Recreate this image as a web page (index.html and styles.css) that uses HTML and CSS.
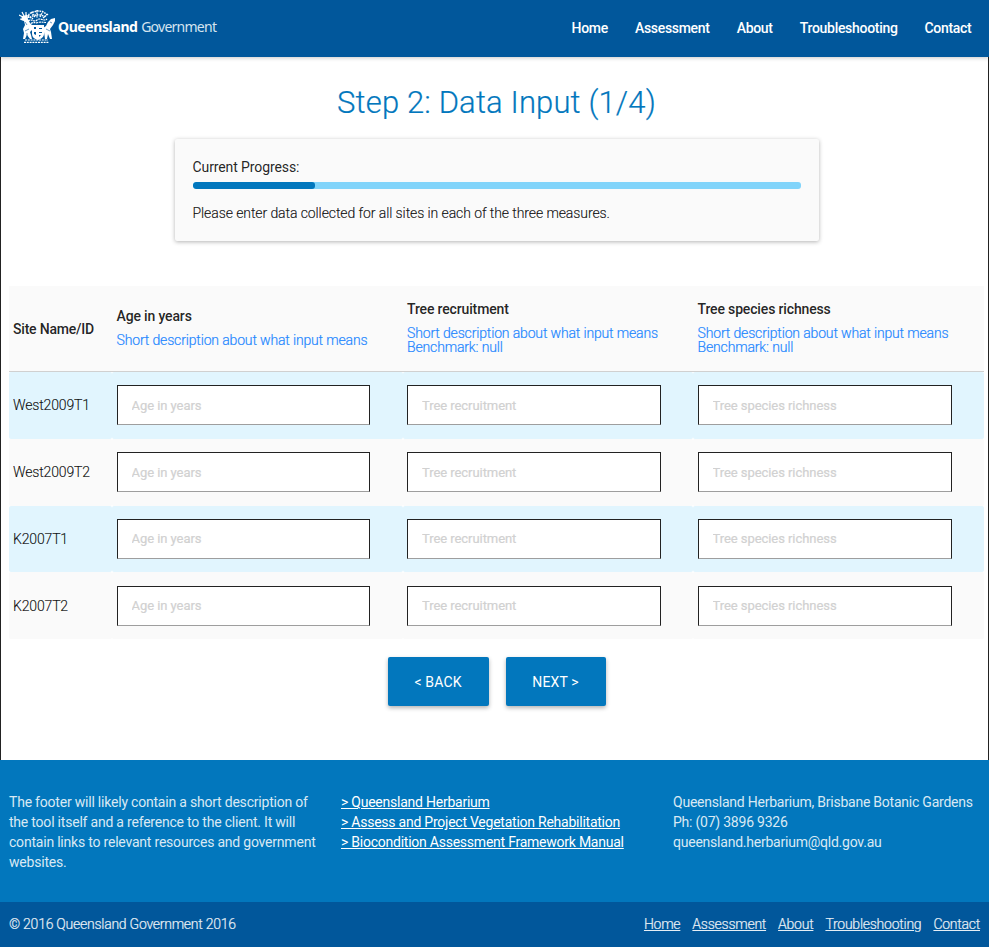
FILE: index.html
```html
<!DOCTYPE html>
<html lang="en">
<head>
<meta charset="utf-8">
<title>Step 2: Data Input</title>
<link rel="stylesheet" href="styles.css">
</head>
<body>
<header class="topbar">
  <a class="brand">
    <svg class="crest" viewBox="0 0 37 34" width="37" height="34" aria-hidden="true">
      <g fill="none" stroke="#fff" stroke-linecap="butt">
        <path stroke-width="1.4" stroke-dasharray="1.7 .8" d="M9 8c0-4 3-6 6-6 4-2 10-1 13 3M9 5l5 4M29 4l-5 4M12 2l4 5M24 1l-3 6M18 0v8M11 8c4-4 11-4 15-1M7 5l4 3"/>
        <path stroke-width="1.2" stroke-dasharray="2 .7" d="M9 11c4-3 6 2 9-1s7 2 10-1M12 13.500c3-2 4 0 7-1s5 0 8 0"/>
        <path stroke-width="1.2" d="M0 5l4 2M3 2l2 4M7 2L7 7M1 9l4 1"/>
        <path stroke-width="1.2" stroke-dasharray="2 .8" d="M5 32.400h25M6 30h23"/>
      </g>
      <g fill="#fff">
        <path d="M3 6l5-1 1 4 2 4 3 3-1 4-2 2 1 3 1 4h-2l-3-4-2 4H4l1-6-1-4 2-4-1-4-3-1z"/>
        <path d="M36 8l-4 1-3 3-2 4-3 2 1 4 1 7h2l1-5 2 5h2l-1-7-1-3 3-4 2-4z"/>
        <path fill-rule="evenodd" d="M13 15h12v9c0 3-3 5-6 6-4-1-6-3-6-6zM15 17v2h2v-2zM20 18v1h3v-1zM15 22v2l2 1v-3zM20 22v1h3v-1zM20 25v2l2-2z"/>
      </g>
      <g fill="none" stroke="#01579b" stroke-width=".6">
        <path d="M6 12l2 3M6 21l4-2M27 19l4 2M31 12l2 1M8 23v4"/>
      </g>
    </svg>
    <span class="wordmark"><b>Queensland</b> <span>Government</span></span>
  </a>
  <nav class="nav"><a>Home</a><a>Assessment</a><a>About</a><a>Troubleshooting</a><a>Contact</a></nav>
</header>

<main class="page">
  <h1>Step 2: Data Input (1/4)</h1>
  <section class="card">
    <div class="card-label">Current Progress:</div>
    <div class="progress"><div class="bar"></div></div>
    <p>Please enter data collected for all sites in each of the three measures.</p>
  </section>

  <table class="sites">
    <colgroup><col class="c-site"><col class="c-age"><col class="c-age"><col></colgroup>
    <thead>
      <tr>
        <th>Site Name/ID</th>
        <th>Age in years<div class="desc">Short description about what input means</div></th>
        <th>Tree recruitment<div class="desc">Short description about what input means<br>Benchmark: null</div></th>
        <th>Tree species richness<div class="desc">Short description about what input means<br>Benchmark: null</div></th>
      </tr>
    </thead>
    <tbody>
      <tr><td>West2009T1</td><td><input placeholder="Age in years"></td><td><input placeholder="Tree recruitment"></td><td><input placeholder="Tree species richness"></td></tr>
      <tr><td>West2009T2</td><td><input placeholder="Age in years"></td><td><input placeholder="Tree recruitment"></td><td><input placeholder="Tree species richness"></td></tr>
      <tr><td>K2007T1</td><td><input placeholder="Age in years"></td><td><input placeholder="Tree recruitment"></td><td><input placeholder="Tree species richness"></td></tr>
      <tr><td>K2007T2</td><td><input placeholder="Age in years"></td><td><input placeholder="Tree recruitment"></td><td><input placeholder="Tree species richness"></td></tr>
    </tbody>
  </table>

  <div class="actions"><button class="back">&lt; BACK</button><button>NEXT &gt;</button></div>
</main>

<footer class="footer">
  <div class="footer-main">
    <div class="about">The footer will likely contain a short description of<br>the tool itself and a reference to the client. It will<br>contain links to relevant resources and government<br>websites.</div>
    <div class="links"><a>&gt; Queensland Herbarium</a><a>&gt; Assess and Project Vegetation Rehabilitation</a><a>&gt; Biocondition Assessment Framework Manual</a></div>
    <div>Queensland Herbarium, Brisbane Botanic Gardens<br>Ph: (07) 3896 9326<br>queensland.herbarium@qld.gov.au</div>
  </div>
  <div class="footer-bar">
    <span>© 2016 Queensland Government 2016</span>
    <nav><a>Home</a><a>Assessment</a><a>About</a><a>Troubleshooting</a><a>Contact</a></nav>
  </div>
</footer>
</body>
</html>
```
FILE: styles.css
```css
* { box-sizing: border-box; }
body {
  margin: 0;
  height: 947px;
  display: flex;
  flex-direction: column;
  overflow: hidden;
  font: 300 14px/20px Roboto, sans-serif;
  color: rgba(0, 0, 0, .87);
  background: #fff;
}
h1, .card p, td, .desc, .footer-bar { -webkit-text-stroke: .2px currentColor; }
.topbar {
  position: relative;
  flex: none;
  height: 57px;
  padding: 0 17.500px 2px 19px;
  display: flex;
  justify-content: space-between;
  align-items: center;
  background: #01579b;
  color: #fff;
  box-shadow: 0 1px 4px rgba(0, 0, 0, .22);
}
.brand { display: flex; align-items: center; height: 53px; margin-top: -1px; }
.crest { display: block; }
.wordmark {
  margin-left: 2px;
  font: 400 14px/20px "Noto Sans", sans-serif;
  color: #d5e4f0;
  white-space: nowrap;
}
.wordmark b { font-weight: 700; color: #fff; letter-spacing: -.4px; }
.wordmark span { letter-spacing: -.75px; }
.nav { display: flex; gap: 27px; font-weight: 500; }
.nav a { letter-spacing: -.3px; }

.page {
  flex: none;
  height: 703px;
  border: solid #222;
  border-width: 0 1px;
  padding: 0 4px 0 8px;
}
h1 {
  margin: 0;
  padding: 26px 0 0;
  font-size: 31px;
  line-height: 40px;
  font-weight: 300;
  letter-spacing: .15px;
  text-align: center;
  color: #0277bd;
}
.card {
  width: 644px;
  height: 102px;
  margin: 16px auto 0;
  padding: 18px;
  background: #fafafa;
  border-radius: 2px;
  box-shadow: 0 1px 4px rgba(0, 0, 0, .3);
}
.card-label { font-weight: 400; letter-spacing: -.1px; }
.progress { height: 7px; margin-top: 5px; border-radius: 3px; background: #81d4fa; overflow: hidden; }
.bar { width: 122px; height: 100%; border-radius: 3px; background: #0277bd; }
.card p { margin: 14px 0 0; letter-spacing: -.09px; }

.sites {
  width: 975px;
  margin-top: 45px;
  table-layout: fixed;
  border-collapse: separate;
  border-spacing: 0;
}
.c-site { width: 103px; }
.c-age { width: 290.5px; }
th, td { padding: 0 4px; text-align: left; vertical-align: middle; border-radius: 2px; background: #fafafa; letter-spacing: -.15px; }
th { height: 86px; padding-bottom: 4px; font-weight: 500; border-bottom: 1px solid #d0d0d0; border-radius: 0; }
th:first-child { padding-bottom: 0; letter-spacing: -.2px; }
th:not(:first-child), td:not(:first-child) { padding-left: 4.500px; }
.desc { margin-top: 7px; line-height: 14px; font-weight: 300; color: #2688ff; letter-spacing: -.15px; }
td { height: 66.75px; }
tbody tr:nth-child(odd) td { background: #e1f5fe; }
input {
  display: block;
  width: 254px;
  height: 40px;
  padding: 0 14px;
  border: 1px solid #222;
  border-bottom-color: #9e9e9e;
  background: #fff;
  font: 400 13px Roboto, sans-serif;
  letter-spacing: -.06px;
}
td:nth-child(2) input { width: 253px; }
input::placeholder { color: #d1d1d1; opacity: 1; }
.actions { display: flex; justify-content: center; gap: 17px; margin-top: 18px; }
button {
  width: 100px;
  height: 49px;
  padding: 0;
  border: 0;
  border-radius: 2px;
  background: #0277bd;
  color: #fff;
  font: 400 14px Roboto, sans-serif;
  letter-spacing: .15px;
  box-shadow: 0 2px 4px rgba(0, 0, 0, .3);
}
.back { width: 101px; }

.footer { flex: 1; display: flex; flex-direction: column; background: #0277bd; color: #d9e9f4; }
.footer-main {
  height: 142px;
  padding: 32px 9px 0;
  display: grid;
  grid-template-columns: 332px 332px 1fr;
  font-weight: 400;
  letter-spacing: -.23px;
  white-space: nowrap;
}
.about { letter-spacing: -.21px; }
.links { display: flex; flex-direction: column; align-items: flex-start; color: #fff; letter-spacing: -.24px; }
.links a { text-decoration: underline; }
.footer-bar {
  flex: 1;
  padding: 0 9px 1px;
  display: flex;
  align-items: center;
  justify-content: space-between;
  background: #01579b;
  color: #e6eef5;
  letter-spacing: -.25px;
}
.footer-bar nav { display: flex; gap: 12px; }
.footer-bar nav a { text-decoration: underline; }
```
